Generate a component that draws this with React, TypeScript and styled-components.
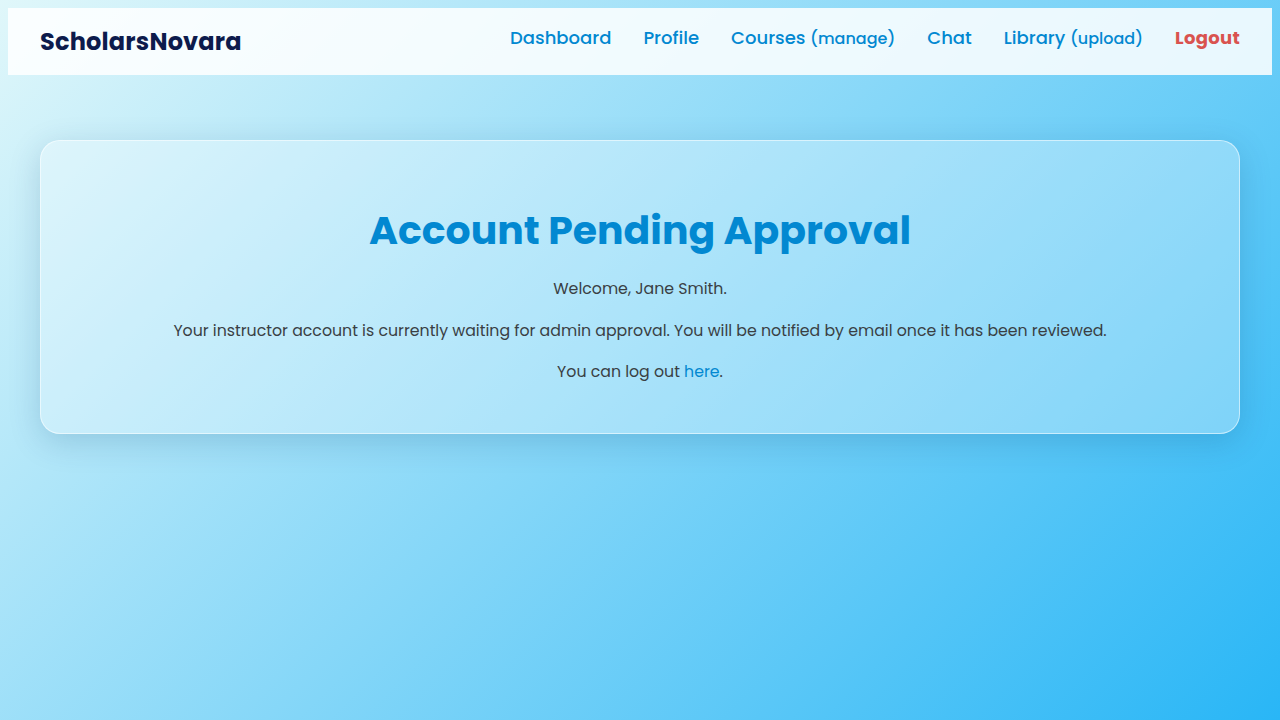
import React from "react";
import styled, { createGlobalStyle } from "styled-components";

const Global = createGlobalStyle`
  html, body { min-height: 100%; }
  body {
    margin: 8px;
    min-height: 704px;
    font-family: "Poppins", "Open Sans", "Noto Sans", sans-serif;
    background: linear-gradient(135deg, #e0f7fa 0%, #29b6f6 100%);
    background-attachment: fixed;
    color: #333;
  }
`;

const NavBar = styled.nav`
  display: flex;
  align-items: center;
  justify-content: space-between;
  height: 67px;
  padding: 0 32px;
  background: rgba(255, 255, 255, 0.85);
  box-sizing: border-box;
`;

const Logo = styled.div`
  font-size: 24px;
  font-weight: 700;
  color: #0d1b4c;
  letter-spacing: 0.2px;
`;

const Links = styled.div`
  display: flex;
  align-items: center;
  gap: 32px;
  padding-bottom: 8px;
`;

const NavLink = styled.a<{ $danger?: boolean }>`
  font-size: 18px;
  font-weight: ${(p) => (p.$danger ? 700 : 500)};
  letter-spacing: ${(p) => (p.$danger ? "0.3px" : "0")};
  color: ${(p) => (p.$danger ? "#d9534f" : "#0288d1")};
  text-decoration: none;
  white-space: nowrap;
`;

const Small = styled.span`
  font-size: 16px;
`;

const Main = styled.main`
  padding: 65px 32px 32px;
`;

const Card = styled.section`
  background: rgba(255, 255, 255, 0.3);
  border: 1px solid rgba(255, 255, 255, 0.55);
  border-radius: 20px;
  box-shadow: 0 8px 32px rgba(0, 60, 110, 0.18);
  padding: 48px 32px 32px;
  text-align: center;
`;

const Title = styled.h1`
  margin: 12px 0 16px;
  font-size: 39.4px;
  font-weight: 700;
  color: #0288d1;
`;

const Para = styled.p`
  margin: 0 0 16px;
  font-size: 15.75px;
  line-height: 1.62;
  color: #3a3f44;
`;

const InlineLink = styled.a`
  color: #0288d1;
  text-decoration: none;
`;

export default function App() {
  return (
    <>
      <Global />
      <NavBar>
        <Logo>ScholarsNovara</Logo>
        <Links>
          <NavLink href="#">Dashboard</NavLink>
          <NavLink href="#">Profile</NavLink>
          <NavLink href="#">
            Courses <Small>(manage)</Small>
          </NavLink>
          <NavLink href="#">Chat</NavLink>
          <NavLink href="#">
            Library <Small>(upload)</Small>
          </NavLink>
          <NavLink href="#" $danger>
            Logout
          </NavLink>
        </Links>
      </NavBar>
      <Main>
        <Card>
          <Title>Account Pending Approval</Title>
          <Para>Welcome, Jane Smith.</Para>
          <Para>
            Your instructor account is currently waiting for admin approval. You will be notified by email once it has been reviewed.
          </Para>
          <Para>
            You can log out <InlineLink href="#">here</InlineLink>.
          </Para>
        </Card>
      </Main>
    </>
  );
}
